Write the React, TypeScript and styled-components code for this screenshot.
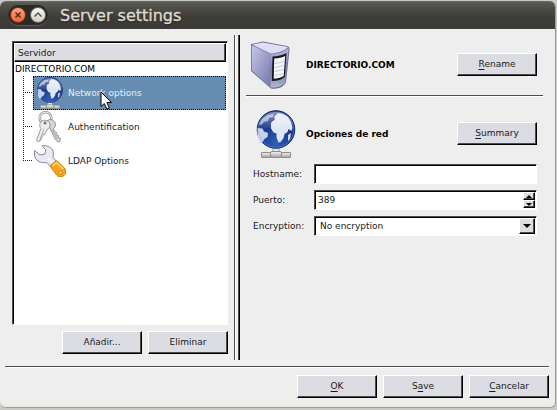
import React, { useState } from "react";
import styled, { createGlobalStyle, css } from "styled-components";

const Global = createGlobalStyle`
  * { box-sizing: border-box; }
  body {
    margin: 0;
    background: #c9c9c7;
    color: #1a1a1a;
    font: 9px/12px "DejaVu Sans", Verdana, sans-serif;
  }
  button, input, select { font: inherit; color: inherit; margin: 0; }
  ul { list-style: none; margin: 0; padding: 0; }
`;

const Desktop = styled.div`
  display: flex;
  min-height: 100vh;
  padding: 1px 1px 2px 0;
`;

const Window = styled.div`
  flex: 1;
  display: flex;
  flex-direction: column;
  min-width: 0;
  background: #eeeeee;
  border: 0 solid #a39a80;
  border-width: 0 1px 1px 0;
  border-radius: 6px;
  overflow: hidden;
`;

const TitleBar = styled.header`
  display: flex;
  align-items: center;
  gap: 12px;
  height: 28px;
  padding: 0 8px;
  background: linear-gradient(#6b6c62 0, #57584f 2px, #3c3b37 17px, #3c3b37 100%);
`;

const WindowControls = styled.div`
  display: flex;
  gap: 4px;
  padding: 2px;
  border-radius: 10px;
  background: #2b2a27;
  box-shadow: 0 1px 0 #56554f;
`;

const RoundButton = styled.button<{ $close?: boolean }>`
  display: grid;
  place-items: center;
  width: 16px;
  height: 16px;
  padding: 0;
  border: 1px solid ${(p) => (p.$close ? "#7c3217" : "#6c6a64")};
  border-radius: 50%;
  background: ${(p) =>
    p.$close ? "linear-gradient(#f9a582, #ec6535)" : "linear-gradient(#faf8f4, #d2cec5)"};
`;

const Title = styled.h1`
  margin: 0;
  padding-top: 2px;
  color: #dfd8c8;
  font-size: 16px;
  line-height: 20px;
  font-weight: 400;
  -webkit-text-stroke: 0.4px #dfd8c8;
  text-shadow: 0 1px 1px #1d1c1a;
`;

const Main = styled.main`
  flex: 1;
  display: grid;
  grid-template-columns: 216px 6px minmax(0, 1fr);
  column-gap: 6px;
  padding: 6px 12px;
`;

const Sidebar = styled.section`
  display: flex;
  flex-direction: column;
  gap: 6px;
  padding: 6px 0;
`;

const sunken = css`
  background: #ffffff;
  border: 1px solid #ffffff;
  border-top-color: #4c4c4c;
  border-left-color: #4c4c4c;
  box-shadow: inset 1px 1px 0 #000000;
`;

const ListBox = styled.div`
  ${sunken}
  flex: 1;
  padding: 1px;
`;

const ListHeader = styled.div`
  height: 19px;
  padding: 3px 3px;
  background: #dcdde3;
  border: 1px solid #ffffff;
  border-right-color: #000000;
  border-bottom-color: #000000;
  box-shadow: inset -1px -1px 0 #4c4c4c;
`;

const TreeRoot = styled.div`
  height: 14px;
  padding: 1px 1px;
  color: #000000;
`;

const Branches = styled.ul`
  padding-left: 9px;
`;

const Branch = styled.li<{ $last?: boolean }>`
  display: grid;
  grid-template-columns: 10px minmax(0, 1fr);
  &::before {
    content: "";
    background:
      repeating-linear-gradient(#222 0 1px, transparent 1px 2px) 0 0 / 1px
        ${(p) => (p.$last ? "17px" : "100%")} no-repeat,
      repeating-linear-gradient(90deg, #222 0 1px, transparent 1px 2px) 2px 16px / 8px 1px no-repeat;
  }
`;

const TreeItem = styled.button<{ $selected: boolean }>`
  position: relative;
  display: flex;
  align-items: center;
  gap: 2px;
  height: 34px;
  padding: 0;
  text-align: left;
  border: 1px dotted ${(p) => (p.$selected ? "#000000" : "transparent")};
  background: ${(p) => (p.$selected ? "#678cb2" : "transparent")};
  color: ${(p) => (p.$selected ? "#e6eef7" : "#1a1a1a")};
`;

const Pointer = styled.svg`
  position: absolute;
  left: 66px;
  top: 14px;
`;

const PushButton = styled.button`
  width: 80px;
  height: 23px;
  padding: 0 0 2px;
  line-height: 12px;
  background: #dcdde3;
  border: 1px solid #ffffff;
  border-right-color: #000000;
  border-bottom-color: #000000;
  box-shadow: inset -1px -1px 0 #4c4c4c;
  u { text-underline-offset: 2px; }
`;

const ButtonRow = styled.div`
  display: flex;
  justify-content: flex-end;
  gap: 6px;
`;

const Splitter = styled.div`
  border-left: 1px solid #4c4c4c;
  border-right: 1px solid #000000;
  box-shadow: inset 1px 0 0 #ffffff, inset -1px 0 0 #4c4c4c;
`;

const Details = styled.section`
  padding-top: 6px;
`;

const Banner = styled.div`
  display: flex;
  align-items: center;
  gap: 6px;
  padding: 0 6px;
`;

const BannerIcon = styled.svg`
  flex: none;
  width: 48px;
  height: 48px;
  margin-bottom: -1px;
  overflow: visible;
`;

const BannerTitle = styled.h2`
  flex: 1;
  margin: 0;
  color: #000000;
  font-size: 9px;
  line-height: 12px;
  font-weight: 700;
`;

const Rule = styled.hr<{ $footer?: boolean }>`
  height: 2px;
  margin: ${(p) => (p.$footer ? "0 6px 0 5px" : "7px 0 13px")};
  border: 0;
  border-top: 1px solid #4c4c4c;
  background: #ffffff;
`;

const Form = styled.form`
  display: grid;
  grid-template-columns: 62px minmax(0, 1fr);
  grid-auto-rows: 20px;
  align-items: center;
  row-gap: 6px;
  padding: 7px 6px 0;
`;

const Label = styled.label`
  padding-left: 1px;
`;

const Field = styled.div`
  ${sunken}
  display: flex;
  align-items: stretch;
  height: 20px;
  padding: 1px;
`;

const TextInput = styled.input`
  flex: 1;
  min-width: 0;
  padding: 0 2px;
  border: 0;
  outline: 0;
  background: transparent;
  appearance: textfield;
  &::-webkit-inner-spin-button { appearance: none; margin: 0; }
`;

const Steppers = styled.div`
  display: grid;
  grid-template-rows: 1fr 1fr;
  width: 12px;
`;

const arrowFace = css`
  display: grid;
  place-items: center;
  padding: 0;
  background: #dcdde3;
  border: 1px solid #ffffff;
  border-right-color: #000000;
  border-bottom-color: #000000;
  box-shadow: inset -1px -1px 0 #4c4c4c;
`;

const Stepper = styled.button`
  ${arrowFace}
`;

const DropDown = styled.div`
  flex: 1;
  display: grid;
  grid-template-columns: minmax(0, 1fr) 16px;
`;

const Select = styled.select`
  grid-area: 1 / 1 / 2 / 3;
  appearance: none;
  padding: 0 4px;
  border: 0;
  outline: 0;
  background: transparent;
`;

const DropArrow = styled.span`
  ${arrowFace}
  grid-area: 1 / 2;
  pointer-events: none;
`;

const Footer = styled.footer`
  padding: 7px 6px 6px;
  border-bottom: 3px solid #efebe2;
`;

function Globe({ id }: { id: string }) {
  return (
    <>
      <defs>
        <radialGradient id={id + "sea"} cx="0.5" cy="0.85" r="0.8">
          <stop offset="0" stopColor="#2c5fb8" />
          <stop offset="0.5" stopColor="#1b3c92" />
          <stop offset="1" stopColor="#112873" />
        </radialGradient>
        <linearGradient id={id + "gloss"} x1="0" y1="0" x2="0" y2="1">
          <stop offset="0" stopColor="#fff" stopOpacity="0.5" />
          <stop offset="1" stopColor="#fff" stopOpacity="0.05" />
        </linearGradient>
        <linearGradient id={id + "metal"} x1="0" y1="0" x2="0" y2="1">
          <stop offset="0" stopColor="#f5f5f3" />
          <stop offset="1" stopColor="#a2a3a0" />
        </linearGradient>
      </defs>
      <path d="M21 37h6v7h-6z" fill="#e8e9e7" stroke="#a5a6a3" />
      <path d="M9.500 42.500h9v5h-9zM29.500 42.500h9v5h-9z" fill={`url(#${id}metal)`} stroke="#8c8d8a" />
      <rect x="18.500" y="41.500" width="11" height="6" rx="1.500" fill={`url(#${id}metal)`} stroke="#8c8d8a" />
      <circle cx="24" cy="19.500" r="18.800" fill={`url(#${id}sea)`} stroke="#142b72" />
      <path
        d="M19 13c1-2 3-2 4-4l-1-2 4-4 5 1 5 3 3 5 1.500 6-1 3-3-2-1 3-3 2-1 4-3 4-2 .5-2-5v-4l-3-1-2.500-4z"
        fill="#dfe6f4"
      />
      <path d="M5.500 18l5 .5 1.500 3 4 1.500-.5 4-3 2-2 3-2 1-2.500-5-.5-5z" fill="#c5d1ed" />
      <path d="M10 9l6-4 6-1-1 3-4 1-1 3-4 1-3 3-2-1z" fill="#8fa3cf" />
      <path d="M36 25l3-2-1 6-2 2z" fill="#d5ddf0" />
      <path d="M6 18C6 9 14 2 24 2s18 7 18 16c-10-5-24 3-36 0z" fill={`url(#${id}gloss)`} />
      <circle cx="24" cy="19.500" r="17.600" fill="none" stroke="#85a6df" strokeOpacity="0.4" />
    </>
  );
}

function ServerDrawing() {
  return (
    <>
      <defs>
        <linearGradient id="srvSide" x1="0" y1="0" x2="1" y2="1">
          <stop offset="0" stopColor="#c6c7ec" />
          <stop offset="1" stopColor="#7477a8" />
        </linearGradient>
        <linearGradient id="srvFront" x1="0" y1="0" x2="0" y2="1">
          <stop offset="0" stopColor="#b6b8de" />
          <stop offset="0.6" stopColor="#777aab" />
          <stop offset="1" stopColor="#b4b6dc" />
        </linearGradient>
      </defs>
      <path d="M0 3L12 .5 36 5c2 .5 2.800 2 2.500 4L35 41c-2 5-8 7.500-15 6.500L0 30z" fill="#6c6e90" />
      <path d="M.8 4.200L19.500 13v33.500L.8 29.500z" fill="url(#srvSide)" />
      <path d="M1.200 3.500L12 1.400 37 6c-4 4-10 6-17.500 6.500z" fill="#dedff6" />
      <path d="M19.500 13c8-.5 14-2.500 18.200-6L34.200 41c-2.500 4-8 6-14.700 5.500z" fill="url(#srvFront)" />
      <path d="M21.500 15.500c5.500 0 10-1.200 14-3.500L33.800 36c-4 3-8 4-13 4z" fill="#17181c" />
      <path d="M23.200 17.500c4.500 0 8-1 11-2.500l-1.500 20c-3.200 2-6.200 2.700-10 2.700z" fill="#f5f6fc" />
      <path d="M24 22.500l9.500-2M24 26.500l9-2M23.500 30.500l9.500-2M23.500 34.500l9-2" stroke="#c6c8d8" />
      <ellipse cx="29" cy="41.500" rx="1.500" ry="1.200" fill="#68bd85" />
    </>
  );
}

function KeysDrawing() {
  return (
    <g stroke="#777" strokeWidth="0.7" strokeLinejoin="round">
      <circle cx="10.500" cy="7" r="5.800" fill="none" stroke="#8a8a8a" strokeWidth="2.600" />
      <circle cx="10.500" cy="7" r="5.800" fill="none" stroke="#e5e5e5" strokeWidth="1.200" />
      <path
        d="M12 10c3-3 8-1 8.500 3 .2 2-.7 3.500-2 4.500l1 3 2 1-.5 2 2.500 1-.5 2 2.500 1-.5 3-2 .5-3-3-5-11c-3-.5-5-4-3-7z"
        fill="#d5d5d5"
      />
      <path
        d="M7 10c3-2 8 0 8 4 0 2-1 4-3 4.500l-1.500 3-1 2-1-.5-1 2.500-1 .5-.5 3-3 2-1.500-2 4.500-11.500c-2-2-1.500-6 1-7.500z"
        fill="#ececec"
      />
      <path d="M9 18L4.500 30M17 18l5 10" fill="none" stroke="#999" />
      <circle cx="10" cy="12" r="1.200" fill="#777" />
    </g>
  );
}

function WrenchDrawing() {
  return (
    <>
      <path
        d="M8 .8C14 0 19 3 19.500 8.500l-.5 4 4 4.500-5.500 5-5-4.500C7 18.500 1 16 .5 10V5.500l5.500 4.500 5-1 .8-4.200z"
        fill="#e8e9f3"
        stroke="#8587a4"
      />
      <path d="M14.500 13l4.500 5" stroke="#fff" strokeWidth="1.500" />
      <path
        d="M16 21l6.500-5.500 8 7.500c2 2.500 1.800 5.500-.5 7.500s-5.500 1.500-7 0z"
        fill="#f9a51c"
        stroke="#c87a08"
      />
      <path d="M18.500 21l3.800-3.500 7 6.500" fill="none" stroke="#ffd678" strokeWidth="1.500" />
      <circle cx="26.500" cy="27.500" r="1.500" fill="#fff0c0" stroke="#b36b05" strokeWidth="0.800" />
    </>
  );
}

function Arrow({ up, size }: { up?: boolean; size: number }) {
  return (
    <svg width={size} height={Math.ceil(size / 2)} viewBox="0 0 8 4" preserveAspectRatio="none" aria-hidden="true">
      <path d={up ? "M0 4L4 0l4 4z" : "M0 0h8L4 4z"} fill="#000" />
    </svg>
  );
}

const items = [
  { label: "Network options", icon: <Globe id="tree" />, box: "0 0 48 48" },
  { label: "Authentification", icon: <KeysDrawing />, box: "-1 0 32 32" },
  { label: "LDAP Options", icon: <WrenchDrawing />, box: "0 0 32 32" },
];

export default function App() {
  const [selected, setSelected] = useState(0);
  const [host, setHost] = useState("");
  const [port, setPort] = useState(389);

  return (
    <>
      <Global />
      <Desktop>
        <Window>
          <TitleBar>
            <WindowControls>
              <RoundButton $close aria-label="Close">
                <svg width="8" height="8" viewBox="0 0 8 8">
                  <path d="M1.500 1.500l5 5M6.500 1.500l-5 5" stroke="#5a2915" strokeWidth="1.500" />
                </svg>
              </RoundButton>
              <RoundButton aria-label="Roll up">
                <svg width="8" height="8" viewBox="0 0 8 8">
                  <path d="M.5 5.500L4 2l3.500 3.500" fill="none" stroke="#55534e" strokeWidth="1.500" />
                </svg>
              </RoundButton>
            </WindowControls>
            <Title>Server settings</Title>
          </TitleBar>
          <Main>
            <Sidebar>
              <ListBox>
                <ListHeader>Servidor</ListHeader>
                <TreeRoot>DIRECTORIO.COM</TreeRoot>
                <Branches>
                  {items.map((item, i) => (
                    <Branch key={item.label} $last={i === items.length - 1}>
                      <TreeItem $selected={selected === i} onClick={() => setSelected(i)}>
                        <svg width="32" height="32" viewBox={item.box} aria-hidden="true">
                          {item.icon}
                        </svg>
                        {item.label}
                        {i === 0 && (
                          <Pointer width="13" height="19" viewBox="0 0 13 19" aria-hidden="true">
                            <path
                              d="M1 1v14.500l3.300-3 2.500 5.500 2.500-1-2.400-5.500H11.500z"
                              fill="#fff"
                              stroke="#000"
                            />
                          </Pointer>
                        )}
                      </TreeItem>
                    </Branch>
                  ))}
                </Branches>
              </ListBox>
              <ButtonRow>
                <PushButton>Añadir...</PushButton>
                <PushButton>Eliminar</PushButton>
              </ButtonRow>
            </Sidebar>
            <Splitter />
            <Details>
              <Banner>
                <BannerIcon viewBox="1 0 48 48" aria-hidden="true">
                  <ServerDrawing />
                </BannerIcon>
                <BannerTitle>DIRECTORIO.COM</BannerTitle>
                <PushButton><u>R</u>ename</PushButton>
              </Banner>
              <Rule />
              <Banner>
                <BannerIcon viewBox="0 0 48 48" aria-hidden="true">
                  <Globe id="banner" />
                </BannerIcon>
                <BannerTitle>Opciones de red</BannerTitle>
                <PushButton><u>S</u>ummary</PushButton>
              </Banner>
              <Form onSubmit={(e) => e.preventDefault()}>
                <Label htmlFor="host">Hostname:</Label>
                <Field>
                  <TextInput id="host" value={host} onChange={(e) => setHost(e.target.value)} />
                </Field>
                <Label htmlFor="port">Puerto:</Label>
                <Field>
                  <TextInput
                    id="port"
                    type="number"
                    value={port}
                    onChange={(e) => setPort(Number(e.target.value))}
                  />
                  <Steppers>
                    <Stepper type="button" aria-label="Increase" onClick={() => setPort(port + 1)}>
                      <Arrow up size={6} />
                    </Stepper>
                    <Stepper type="button" aria-label="Decrease" onClick={() => setPort(port - 1)}>
                      <Arrow size={6} />
                    </Stepper>
                  </Steppers>
                </Field>
                <Label htmlFor="encryption">Encryption:</Label>
                <Field>
                  <DropDown>
                    <Select id="encryption">
                      <option>No encryption</option>
                    </Select>
                    <DropArrow>
                      <Arrow size={8} />
                    </DropArrow>
                  </DropDown>
                </Field>
              </Form>
            </Details>
          </Main>
          <Rule $footer />
          <Footer>
            <ButtonRow>
              <PushButton><u>O</u>K</PushButton>
              <PushButton>S<u>a</u>ve</PushButton>
              <PushButton><u>C</u>ancelar</PushButton>
            </ButtonRow>
          </Footer>
        </Window>
      </Desktop>
    </>
  );
}
